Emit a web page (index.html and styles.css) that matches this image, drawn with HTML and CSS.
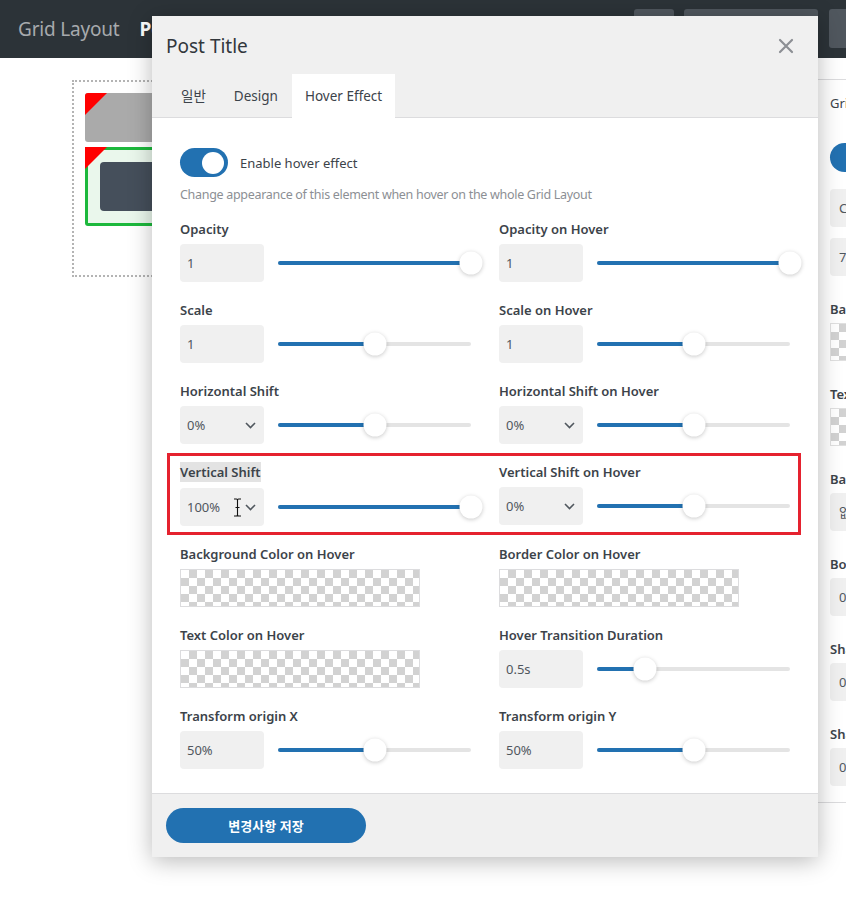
FILE: index.html
```html
<!DOCTYPE html>
<html lang="ko">
<head>
<meta charset="utf-8">
<title>Grid Layout - Post Title</title>
<link rel="stylesheet" href="styles.css">
</head>
<body>
<div class="topbar">
  <div class="brand">Grid Layout</div>
  <div class="crumb">Post</div>
  <div class="top-actions">
    <div class="tbtn tbtn-sm"></div>
    <div class="tbtn tbtn-lg"></div>
    <div class="tbtn tbtn-end"></div>
  </div>
</div>

<div class="main">
  <div class="canvas">
    <div class="frame">
      <div class="block-gray"></div>
      <div class="block-green"><div class="block-dark"></div></div>
    </div>
  </div>
  <aside class="sidebar">
    <div class="sb-label first">Grid Item</div>
    <div class="sb-toggle"></div>
    <div class="sb-box sb-a">Custom</div>
    <div class="sb-box sb-b">700</div>
    <div class="sb-label">Background</div>
    <div class="sb-check"></div>
    <div class="sb-label">Text Color</div>
    <div class="sb-check"></div>
    <div class="sb-label">Background</div>
    <div class="sb-box">없음</div>
    <div class="sb-label">Border</div>
    <div class="sb-box">0</div>
    <div class="sb-label">Shadow</div>
    <div class="sb-box">0</div>
    <div class="sb-label">Shadow</div>
    <div class="sb-box">0</div>
  </aside>
</div>

<div class="modal">
  <div class="modal-head">
    <div class="title-row">
      <div class="modal-title">Post Title</div>
      <svg class="close" width="16" height="16" viewBox="0 0 16 16"><path d="M2 2 L14 14 M14 2 L2 14" stroke="#8c8f94" stroke-width="2.2" stroke-linecap="round" fill="none"/></svg>
    </div>
    <div class="tabs">
      <div class="tab">일반</div>
      <div class="tab">Design</div>
      <div class="tab active">Hover Effect</div>
    </div>
  </div>

  <div class="modal-body">
    <div class="toggle-row">
      <div class="toggle"><div class="knob"></div></div>
      <span class="toggle-text">Enable hover effect</span>
    </div>
    <div class="desc">Change appearance of this element when hover on the whole Grid Layout</div>

    <div class="grid">
      <div class="field">
        <div class="label">Opacity</div>
        <div class="ctrl">
          <div class="input">1</div>
          <div class="slider"><div class="track"><div class="fill" style="width:100%"></div><div class="thumb" style="left:100%"></div></div></div>
        </div>
      </div>
      <div class="field">
        <div class="label">Opacity on Hover</div>
        <div class="ctrl">
          <div class="input">1</div>
          <div class="slider"><div class="track"><div class="fill" style="width:100%"></div><div class="thumb" style="left:100%"></div></div></div>
        </div>
      </div>

      <div class="field">
        <div class="label">Scale</div>
        <div class="ctrl">
          <div class="input">1</div>
          <div class="slider"><div class="track"><div class="fill" style="width:50%"></div><div class="thumb" style="left:50%"></div></div></div>
        </div>
      </div>
      <div class="field">
        <div class="label">Scale on Hover</div>
        <div class="ctrl">
          <div class="input">1</div>
          <div class="slider"><div class="track"><div class="fill" style="width:50%"></div><div class="thumb" style="left:50%"></div></div></div>
        </div>
      </div>

      <div class="field">
        <div class="label">Horizontal Shift</div>
        <div class="ctrl">
          <div class="input select"><span>0%</span><svg class="chev" width="11" height="7" viewBox="0 0 11 7"><path d="M1 1 L5.5 5.5 L10 1" stroke="#50575e" stroke-width="1.6" fill="none"/></svg></div>
          <div class="slider"><div class="track"><div class="fill" style="width:50%"></div><div class="thumb" style="left:50%"></div></div></div>
        </div>
      </div>
      <div class="field">
        <div class="label">Horizontal Shift on Hover</div>
        <div class="ctrl">
          <div class="input select"><span>0%</span><svg class="chev" width="11" height="7" viewBox="0 0 11 7"><path d="M1 1 L5.5 5.5 L10 1" stroke="#50575e" stroke-width="1.6" fill="none"/></svg></div>
          <div class="slider"><div class="track"><div class="fill" style="width:50%"></div><div class="thumb" style="left:50%"></div></div></div>
        </div>
      </div>

      <div class="field">
        <div class="label"><span class="sel">Vertical Shift</span></div>
        <div class="ctrl">
          <div class="input select has-cursor"><span>100%</span>
            <svg class="ibeam" width="9" height="19" viewBox="0 0 9 19"><path d="M1 1 H3.5 Q4.5 1 4.5 2.5 V16.5 Q4.5 18 3.5 18 H1 M8 1 H5.5 Q4.5 1 4.5 2.5 M4.5 16.5 Q4.5 18 5.5 18 H8 M2.5 9.5 H6.5" stroke="#111" stroke-width="1.1" fill="none"/></svg>
            <svg class="chev" width="11" height="7" viewBox="0 0 11 7"><path d="M1 1 L5.5 5.5 L10 1" stroke="#50575e" stroke-width="1.6" fill="none"/></svg></div>
          <div class="slider"><div class="track"><div class="fill" style="width:100%"></div><div class="thumb" style="left:100%"></div></div></div>
        </div>
      </div>
      <div class="field">
        <div class="label">Vertical Shift on Hover</div>
        <div class="ctrl">
          <div class="input select"><span>0%</span><svg class="chev" width="11" height="7" viewBox="0 0 11 7"><path d="M1 1 L5.5 5.5 L10 1" stroke="#50575e" stroke-width="1.6" fill="none"/></svg></div>
          <div class="slider"><div class="track"><div class="fill" style="width:50%"></div><div class="thumb" style="left:50%"></div></div></div>
        </div>
      </div>

      <div class="field">
        <div class="label">Background Color on Hover</div>
        <div class="checker"></div>
      </div>
      <div class="field">
        <div class="label">Border Color on Hover</div>
        <div class="checker"></div>
      </div>

      <div class="field">
        <div class="label">Text Color on Hover</div>
        <div class="checker"></div>
      </div>
      <div class="field">
        <div class="label">Hover Transition Duration</div>
        <div class="ctrl">
          <div class="input">0.5s</div>
          <div class="slider"><div class="track"><div class="fill" style="width:25%"></div><div class="thumb" style="left:25%"></div></div></div>
        </div>
      </div>

      <div class="field">
        <div class="label">Transform origin X</div>
        <div class="ctrl">
          <div class="input">50%</div>
          <div class="slider"><div class="track"><div class="fill" style="width:50%"></div><div class="thumb" style="left:50%"></div></div></div>
        </div>
      </div>
      <div class="field">
        <div class="label">Transform origin Y</div>
        <div class="ctrl">
          <div class="input">50%</div>
          <div class="slider"><div class="track"><div class="fill" style="width:50%"></div><div class="thumb" style="left:50%"></div></div></div>
        </div>
      </div>
    </div>
    <div class="highlight"></div>
  </div>

  <div class="modal-foot">
    <button class="save">변경사항 저장</button>
  </div>
</div>
</body>
</html>
```

FILE: styles.css
```css
* { box-sizing: border-box; }
html, body { margin: 0; padding: 0; }
body {
  width: 846px;
  height: 900px;
  overflow: hidden;
  position: relative;
  background: #fff;
  font-family: "Noto Sans", "Noto Sans CJK KR", sans-serif;
  color: #3c434a;
}

/* top bar */
.topbar {
  height: 58px;
  background: #2c3338;
  display: flex;
  align-items: flex-start;
  padding-left: 18px;
  overflow: hidden;
}
.brand { color: #a7aaad; font-size: 19px; line-height: 58px; letter-spacing: -0.2px; }
.crumb { color: #fff; font-size: 19px; font-weight: 700; margin-left: 20px; line-height: 58px; }
.top-actions { margin-left: auto; display: flex; padding-top: 9px; margin-right: -43px; }
.tbtn { height: 39px; background: #50575e; border-radius: 3px; }
.tbtn-sm { width: 40px; margin-right: 10px; }
.tbtn-lg { width: 134px; margin-right: 11px; }
.tbtn-end { width: 60px; }

/* main layout */
.main {
  display: grid;
  grid-template-columns: 818px 300px;
  height: 842px;
}
.canvas { padding: 22px 0 0 72px; }
.frame {
  width: 220px;
  height: 197px;
  border: 2px dotted #b4b4b4;
  padding: 11px;
}
.block-gray {
  position: relative;
  height: 49px;
  background: #aaaaaa;
  border-radius: 3px;
  overflow: hidden;
}
.block-gray::before, .block-green::before {
  content: "";
  position: absolute;
  left: 0; top: 0;
  border-top: 22px solid #ff0000;
  border-right: 22px solid transparent;
}
.block-green::before { left: -3px; top: -3px; }
.block-green {
  position: relative;
  margin-top: 5px;
  height: 79px;
  border: 3px solid #1cb83c;
  background: #eaf7ec;
  border-radius: 3px;
  padding: 12px;
}
.block-dark { height: 49px; background: #454f5b; border-radius: 4px; }

/* sidebar (partly hidden) */
.sidebar {
  margin-top: 21px;
  height: 724px;
  border-top: 1px solid #dcdcde;
  border-bottom: 1px solid #dcdcde;
  padding: 14px 0 0 12px;
  font-size: 13px;
}
.sb-label { line-height: 18px; font-weight: 600; margin-top: 24px; margin-bottom: 5px; white-space: nowrap; }
.sb-label.first { font-weight: 400; margin-top: 0; }
.sb-toggle { width: 48px; height: 29px; border-radius: 15px; background: #2271b1; margin-top: 31px; }
.sb-box {
  height: 38px; background: #f0f0f0; border-radius: 4px; width: 200px;
  padding-left: 9px; line-height: 38px; color: #50575e; white-space: nowrap;
}
.sb-a { margin-top: 17px; }
.sb-b { margin-top: 11px; }
.sb-check {
  height: 38px; width: 200px; border: 1px solid #e0e0e0;
  background: repeating-conic-gradient(#d2d2d2 0 25%, #fff 0 50%) 0 0 / 16px 16px;
}

/* modal */
.modal {
  position: absolute;
  left: 152px;
  top: 16px;
  width: 666px;
  height: 841px;
  background: #fff;
  box-shadow: 0 4px 22px rgba(0, 0, 0, 0.28);
  display: flex;
  flex-direction: column;
}
.modal-head { background: #f0f0f0; border-bottom: 1px solid #dcdcde; }
.title-row {
  height: 58px;
  display: flex;
  align-items: center;
  justify-content: space-between;
  padding: 2px 24px 0 14px;
}
.modal-title { font-size: 19px; color: #32373c; }
.close { display: block; }
.tabs { display: flex; padding-left: 15px; height: 44px; margin-bottom: -1px; }
.tab {
  padding: 0 14px;
  line-height: 44px;
  font-size: 13.5px;
  color: #3c434a;
}
.tab.active { background: #fff; padding: 0 13px; }

.modal-body {
  position: relative;
  flex: 1;
  padding: 30px 28px 0 28px;
}
.toggle-row { display: flex; align-items: center; gap: 12px; }
.toggle {
  width: 48px; height: 29px; border-radius: 15px; background: #2271b1;
  display: flex; align-items: center; justify-content: flex-end; padding-right: 4px;
}
.knob { width: 22px; height: 22px; border-radius: 50%; background: #fff; }
.toggle-text { font-size: 13px; color: #3c434a; }
.desc {
  margin-top: 9px;
  font-size: 12.5px;
  letter-spacing: -0.3px;
  line-height: 18px;
  color: #8c8f94;
  white-space: nowrap;
}

.grid {
  margin-top: 16px;
  display: grid;
  grid-template-columns: 291px 291px;
  column-gap: 28px;
  row-gap: 19px;
}
.label {
  font-size: 13px;
  font-weight: 600;
  line-height: 18px;
  color: #3c434a;
  margin-bottom: 6px;
  white-space: nowrap;
}
.sel { background: #e3e3e3; display: inline-block; line-height: 20px; margin-top: -1px; }
.ctrl { display: flex; align-items: center; gap: 14px; height: 38px; }
.input {
  width: 84px;
  height: 38px;
  flex-shrink: 0;
  background: #f0f0f0;
  border-radius: 4px;
  padding: 0 8px 0 7px;
  display: flex;
  align-items: center;
  font-size: 13px;
  color: #50575e;
}
.select { justify-content: space-between; }
.has-cursor { position: relative; }
.ibeam { position: absolute; left: 53px; top: 10px; }
.chev { display: block; }
.slider { flex: 1; }
.track {
  position: relative;
  height: 4px;
  background: #e4e4e4;
  border-radius: 2px;
}
.fill { height: 4px; background: #2271b1; border-radius: 2px; }
.thumb {
  position: absolute;
  top: 50%;
  width: 23px;
  height: 23px;
  border-radius: 50%;
  background: #fff;
  transform: translate(-50%, -50%);
  box-shadow: 0 1px 4px rgba(0, 0, 0, 0.22);
}
.checker {
  width: 240px;
  height: 38px;
  border: 1px solid #dcdcde;
  background: repeating-conic-gradient(#d2d2d2 0 25%, #fff 0 50%) 0 0 / 16px 16px;
}
.highlight {
  position: absolute;
  left: 15px;
  top: 335px;
  width: 634px;
  height: 82px;
  border: 3px solid #e5222f;
}

.modal-foot {
  height: 64px;
  background: #f0f0f0;
  border-top: 1px solid #dcdcde;
  padding: 14px 14px 0;
}
.save {
  width: 200px;
  height: 35px;
  border: none;
  border-radius: 18px;
  background: #2271b1;
  color: #fff;
  font-family: "Noto Sans CJK KR", sans-serif;
  font-weight: 700;
  font-size: 13px;
}
```
